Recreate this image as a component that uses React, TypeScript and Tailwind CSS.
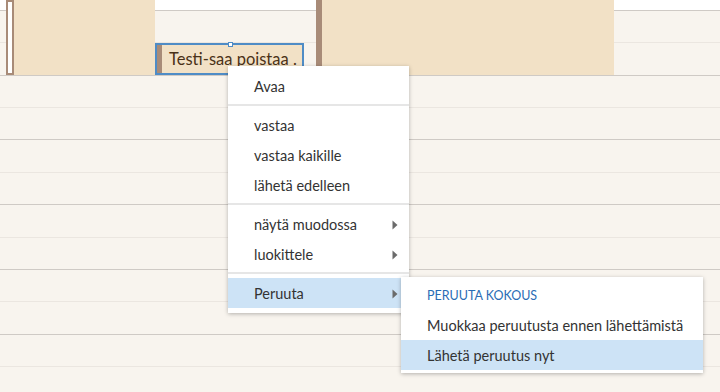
import React from "react";

const rows: { h: string; line: string }[] = [
  { h: "h-[32px]", line: "border-[#ebe6e0]" },
  { h: "h-[33px]", line: "border-[#cfcac5]" },
  { h: "h-[32px]", line: "border-[#ebe6e0]" },
  { h: "h-[32px]", line: "border-[#cfcac5]" },
  { h: "h-[33px]", line: "border-[#ebe6e0]" },
  { h: "h-[32px]", line: "border-[#cfcac5]" },
  { h: "h-[33px]", line: "border-[#ebe6e0]" },
  { h: "h-[32px]", line: "border-[#cfcac5]" },
  { h: "h-[32px]", line: "border-[#ebe6e0]" },
  { h: "h-[33px]", line: "border-[#cfcac5]" },
  { h: "h-[32px]", line: "border-[#ebe6e0]" },
];

function Arrow() {
  return (
    <svg width="6" height="10" viewBox="0 0 6 10" className="shrink-0" aria-hidden>
      <path d="M0.5 0.5 L5.5 5 L0.5 9.5 Z" fill="#6b6b6b" />
    </svg>
  );
}

function MenuItem({
  label,
  submenu = false,
  active = false,
}: {
  label: string;
  submenu?: boolean;
  active?: boolean;
}) {
  return (
    <div
      className={
        "flex h-[30px] items-center justify-between whitespace-nowrap pl-[26px] pr-[11px] pt-[2px] " +
        (active ? "bg-[#cde3f6]" : "")
      }
    >
      <span>{label}</span>
      {submenu ? <Arrow /> : null}
    </div>
  );
}

function Separator() {
  return <div className="mt-[3px] mb-[4px] h-[2px] bg-[#e6e6e6]" />;
}

export default function App() {
  return (
    <div
      className="relative h-[392px] w-[720px] overflow-hidden bg-[#f8f4ee] text-[14.5px] text-[#333333]"
      style={{ fontFamily: 'Lato, "Open Sans", sans-serif' }}
    >
      {/* calendar grid */}
      <div className="h-[11px] border-b border-[#cfcac5] bg-white" />
      {rows.map((r, i) => (
        <div key={i} className={"border-b " + r.h + " " + r.line} />
      ))}

      {/* events */}
      <div className="absolute left-[6px] top-0 flex h-[75px] w-[149px]">
        <div className="w-[8px] border-2 border-[#a88b78] bg-white" />
        <div className="flex-1 bg-[#f2e1c6]" />
      </div>

      <div className="absolute left-[155px] top-[43px] flex h-[32px] w-[149px] border-2 border-[#4f8cc6] bg-[#f2e1c6]">
        <div className="w-[5px] bg-[#a88b78]" />
        <span className="whitespace-nowrap pl-[7px] text-[16.5px] leading-[29px] text-[#4a3117]">
          Testi-saa poistaa .
        </span>
        <div className="absolute left-[71px] top-[-3px] h-[5px] w-[5px] border border-[#4f8cc6] bg-white" />
      </div>

      <div className="absolute left-[316px] top-0 flex h-[75px] w-[298px]">
        <div className="w-[6px] bg-[#a88b78]" />
        <div className="flex-1 bg-[#f2e1c6]" />
      </div>

      {/* context menu */}
      <div className="absolute left-[228px] top-[66px] w-[181px] bg-white py-[5px] shadow-[0_1px_4px_rgba(0,0,0,0.28)]">
        <MenuItem label="Avaa" />
        <Separator />
        <MenuItem label="vastaa" />
        <MenuItem label="vastaa kaikille" />
        <MenuItem label="lähetä edelleen" />
        <Separator />
        <MenuItem label="näytä muodossa" submenu />
        <MenuItem label="luokittele" submenu />
        <Separator />
        <MenuItem label="Peruuta" submenu active />
      </div>

      {/* submenu */}
      <div className="absolute left-[401px] top-[277px] w-[302px] bg-white py-[3px] shadow-[0_1px_4px_rgba(0,0,0,0.28)]">
        <div className="flex h-[30px] items-center pl-[26px] pt-[2px] text-[12.5px] text-[#2a6db5]">
          PERUUTA KOKOUS
        </div>
        <MenuItem label="Muokkaa peruutusta ennen lähettämistä" />
        <MenuItem label="Lähetä peruutus nyt" active />
      </div>
    </div>
  );
}
